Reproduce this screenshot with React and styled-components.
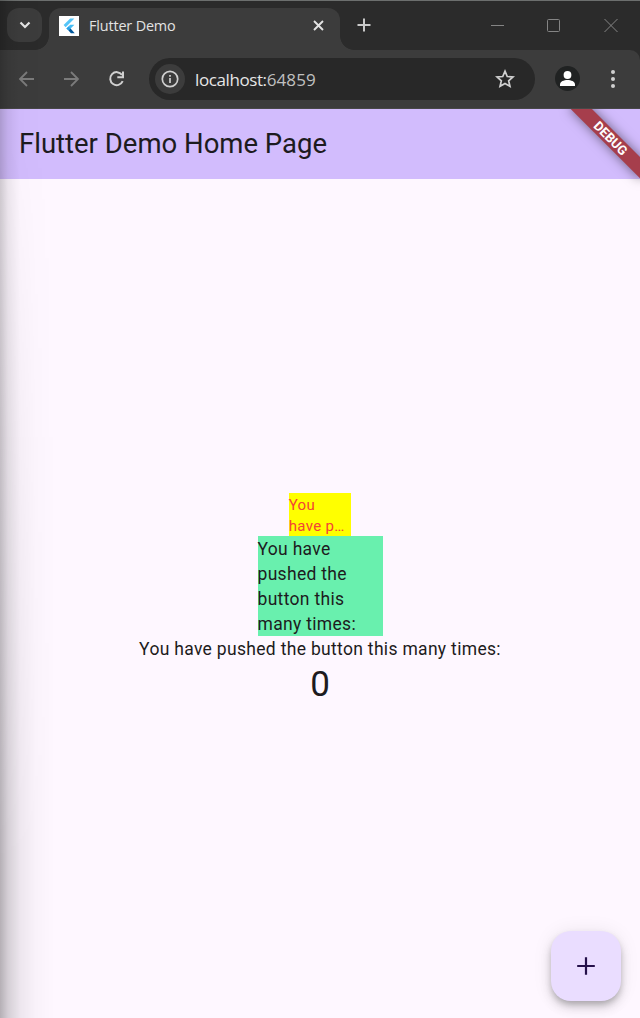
import React from "react";
import styled, { createGlobalStyle } from "styled-components";

const GlobalStyle = createGlobalStyle`
  *, *::before, *::after { box-sizing: border-box; }
  body { margin: 0; background: #fef7ff; }
`;

const Window = styled.div`
  position: relative;
  width: 640px;
  height: 1018px;
  display: flex;
  flex-direction: column;
  overflow: hidden;
  background: #2b2b2b;
  font-family: Roboto, "Liberation Sans", sans-serif;
`;

const TabStrip = styled.header`
  height: 50px;
  display: flex;
  padding: 7px 0 0 7px;
  border-top: 1px solid #6c6f6e;
  color: #e3e3e3;
`;

const TabSearch = styled.button`
  width: 35px;
  height: 34px;
  border: 0;
  padding: 0;
  border-radius: 12px;
  background: #3c3c3c;
  color: inherit;
  display: flex;
  align-items: center;
  justify-content: center;
`;

const Tab = styled.div`
  position: relative;
  width: 291px;
  height: 42px;
  margin-left: 7px;
  padding: 0 15px 7px 10px;
  display: flex;
  align-items: center;
  border-radius: 12px 12px 0 0;
  background: #3c3c3c;
  &::before, &::after {
    content: "";
    position: absolute;
    bottom: 0;
    width: 14px;
    height: 14px;
  }
  &::before { right: 100%; background: radial-gradient(circle at 0 0, transparent 13.5px, #3c3c3c 14.2px); }
  &::after { left: 100%; background: radial-gradient(circle at 100% 0, transparent 13.5px, #3c3c3c 14.2px); }
`;

const Favicon = styled.span`
  width: 20px;
  height: 20px;
  background: #fff;
  display: flex;
`;

const TabTitle = styled.span`
  flex: 1;
  margin-left: 10px;
  font: 14.4px/20px "Open Sans", "Noto Sans", sans-serif;
  letter-spacing: -0.15px;
  white-space: nowrap;
`;

const NewTab = styled.span`
  display: flex;
  margin: 10px 0 0 17px;
  color: #cacaca;
`;

const WindowControls = styled.div`
  display: flex;
  margin: 10px 22px 0 auto;
  gap: 43px;
  color: #858585;
`;

const Toolbar = styled.div`
  height: 59px;
  flex: none;
  display: flex;
  align-items: center;
  padding: 0 19px 1px 17px;
  background: #3c3c3c;
  border-bottom: 1px solid #484848;
  border-radius: 0 10px 0 0;
  color: #d0d0d0;
`;

const NavButton = styled.span`
  display: flex;
  width: 20px;
  margin-right: 25px;
  color: ${(p) => (p.$disabled ? "#7b7b7b" : "#d0d0d0")};
`;

const AddressBar = styled.div`
  width: 386px;
  height: 42px;
  margin-left: -3px;
  padding: 0 20px 0 6px;
  display: flex;
  align-items: center;
  border-radius: 21px;
  background: #282828;
`;

const SiteInfo = styled.span`
  width: 30px;
  height: 30px;
  border-radius: 50%;
  background: #3c3c3c;
  display: flex;
  align-items: center;
  justify-content: center;
`;

const Url = styled.span`
  flex: 1;
  margin-left: 10px;
  padding-top: 2px;
  font: 17px/24px "Open Sans", "Noto Sans", sans-serif;
  letter-spacing: -0.4px;
  color: #e6e6e6;
`;

const Port = styled.span`
  color: #c0c0c0;
  letter-spacing: 0.1px;
`;

const Profile = styled.span`
  width: 25px;
  height: 25px;
  margin: 0 auto 0 20px;
  border-radius: 50%;
  background: #202222;
  display: flex;
  align-items: center;
  justify-content: center;
`;

const Page = styled.main`
  position: relative;
  flex: 1;
  display: flex;
  flex-direction: column;
  overflow: hidden;
  background: #fef7ff;
  color: #1d1b20;
`;

const AppBar = styled.div`
  height: 70px;
  padding: 0 0 2px 19px;
  display: flex;
  align-items: center;
  background: #d2bcfd;
`;

const AppTitle = styled.h1`
  margin: 0;
  font-size: 27.5px;
  line-height: 35px;
  font-weight: 400;
`;

const DebugBanner = styled.div`
  position: absolute;
  top: 34px;
  right: -50px;
  width: 100px;
  height: 15px;
  transform-origin: 50% -34px;
  transform: rotate(45deg);
  background: #a63e4c;
  box-shadow: 0 0 12px rgba(0, 0, 0, 0.5);
  color: #fff;
  font-size: 13px;
  line-height: 15px;
  font-weight: 700;
  text-align: center;
`;

const Counter = styled.section`
  flex: 1;
  display: flex;
  flex-direction: column;
  align-items: center;
  justify-content: center;
  padding-top: 2px;
  font-size: 17.5px;
  line-height: 25px;
  letter-spacing: 0.3125px;
`;

const ClippedNote = styled.div`
  width: 62.5px;
  height: 43px;
  padding-top: 2.5px;
  background: #ffff00;
  color: #f44336;
  font-size: 15px;
  line-height: 20.7px;
`;

const ClippedLine = styled.div`
  white-space: nowrap;
`;

const WrappedNote = styled.div`
  width: 125px;
  height: 100px;
  padding-top: 1px;
  background: #69f0ae;
`;

const Message = styled.div`
  padding-top: 1px;
  white-space: nowrap;
`;

const Count = styled.div`
  font-size: 35px;
  line-height: 45px;
  letter-spacing: 0;
`;

const AddButton = styled.button`
  position: absolute;
  right: 19px;
  bottom: 17px;
  width: 70px;
  height: 70px;
  padding: 0;
  border: 0;
  border-radius: 20px;
  background: #eaddff;
  color: #25104a;
  display: flex;
  align-items: center;
  justify-content: center;
  box-shadow: 0 4px 6px -1px rgba(0, 0, 0, 0.22), 0 7px 12px rgba(0, 0, 0, 0.12), 0 1px 20px rgba(0, 0, 0, 0.08);
`;

const EdgeShade = styled.div`
  position: absolute;
  inset: 0 auto 0 0;
  width: 55px;
  pointer-events: none;
  &::before, &::after {
    content: "";
    position: absolute;
    inset: 0 auto 0 0;
  }
  &::before {
    width: 20px;
    background: linear-gradient(to right, rgba(0,0,0,.17), rgba(0,0,0,.06) 40%, transparent);
  }
  &::after {
    width: 55px;
    background: linear-gradient(to right, rgba(0,0,0,.14), rgba(0,0,0,.07) 35%, rgba(0,0,0,.02) 65%, transparent);
    mask-image: linear-gradient(to bottom, rgba(0,0,0,.1) 15%, rgba(0,0,0,.6) 50%, #000 85%);
  }
`;

const Line = ({ size = 20, width = 1.8, d, children, ...rest }) => (
  <svg width={size} height={size} viewBox={`0 0 ${size} ${size}`} fill="none" stroke="currentColor" strokeWidth={width} {...rest}>
    {d && <path d={d} />}
    {children}
  </svg>
);

const OverflowLine = styled(Line)`
  overflow: visible;
`;

export default function App() {
  return (
    <Window>
      <GlobalStyle />
      <TabStrip>
        <TabSearch aria-label="Search tabs">
          <Line size={12} width={2.2} d="M1.5 3.5 6 8l4.500-4.500" />
        </TabSearch>
        <Tab>
          <Favicon>
            <svg width="20" height="20" viewBox="0 0 20 20">
              <path d="M11.200 2.500h4.200L6.700 11.200 4.600 9.100z" fill="#54c5f8" />
              <path d="M11.200 8.700h4.200l-3.800 3.800-2.100 2.100-2.100-2.100z" fill="#45bdf5" />
              <path d="M7.400 12.500 9.500 10.400l2.100 2.100-2.100 2.100z" fill="#29a0e8" />
              <path d="m9.500 14.600 2.100-2.100 4.100 4.700h-3.800z" fill="#01579b" />
            </svg>
          </Favicon>
          <TabTitle>Flutter Demo</TabTitle>
          <Line size={13} width={1.9} d="m2 2 9 9M11 2l-9 9" />
        </Tab>
        <NewTab><Line size={14} width={2} d="M7 .5v13M.5 7h13" /></NewTab>
        <WindowControls>
          <Line size={14} width={1} d="M1 7.500h13" />
          <Line size={14} width={1}><rect x=".5" y="1.500" width="12" height="12" rx="1" /></Line>
          <OverflowLine size={14} width={1} d="m.5 1 13 13M13.500 1l-13 13" />
        </WindowControls>
      </TabStrip>
      <Toolbar>
        <NavButton $disabled><Line d="M17 10H3.500M10 3l-7 7 7 7" /></NavButton>
        <NavButton $disabled><Line d="M2 10h13.500M9 3l7 7-7 7" /></NavButton>
        <NavButton><Line width={2} d="M15 5.800A6.500 6.500 0 1 0 15.700 12.200M16 2.500v5.700h-5.700" /></NavButton>
        <AddressBar>
          <SiteInfo>
            <Line size={18} width={1.7}>
              <circle cx="9" cy="9" r="7.700" />
              <path d="M9 8v5M9 5v1.800" />
            </Line>
          </SiteInfo>
          <Url>localhost:<Port>64859</Port></Url>
          <Line width={1.7} d="m10 2.200 2.250 5.300 5.700.5-4.300 3.750 1.300 5.600L10 14.400l-4.950 2.950 1.300-5.600L2.050 8l5.700-.5z" />
        </AddressBar>
        <Profile>
          <svg width="17" height="17" viewBox="0 0 17 17" fill="#fff">
            <circle cx="8.500" cy="5" r="3.900" />
            <path d="M1 16v-1.600C1 11.500 5 10 8.500 10s7.500 1.500 7.500 4.400V16z" />
          </svg>
        </Profile>
        <svg width="16" height="20" viewBox="0 0 16 20" fill="currentColor">
          <circle cx="8" cy="3" r="2" /><circle cx="8" cy="10" r="2" /><circle cx="8" cy="17" r="2" />
        </svg>
      </Toolbar>
      <Page>
        <AppBar><AppTitle>Flutter Demo Home Page</AppTitle></AppBar>
        <Counter>
          <ClippedNote>
            <ClippedLine>You</ClippedLine>
            <ClippedLine>have p…</ClippedLine>
          </ClippedNote>
          <WrappedNote>You have pushed the button this many times:</WrappedNote>
          <Message>You have pushed the button this many times:</Message>
          <Count>0</Count>
        </Counter>
        <AddButton aria-label="Increment">
          <Line size={18} width={2.2} d="M9 .2v17.600M.2 9h17.600" />
        </AddButton>
        <DebugBanner>DEBUG</DebugBanner>
      </Page>
      <EdgeShade />
    </Window>
  );
}
